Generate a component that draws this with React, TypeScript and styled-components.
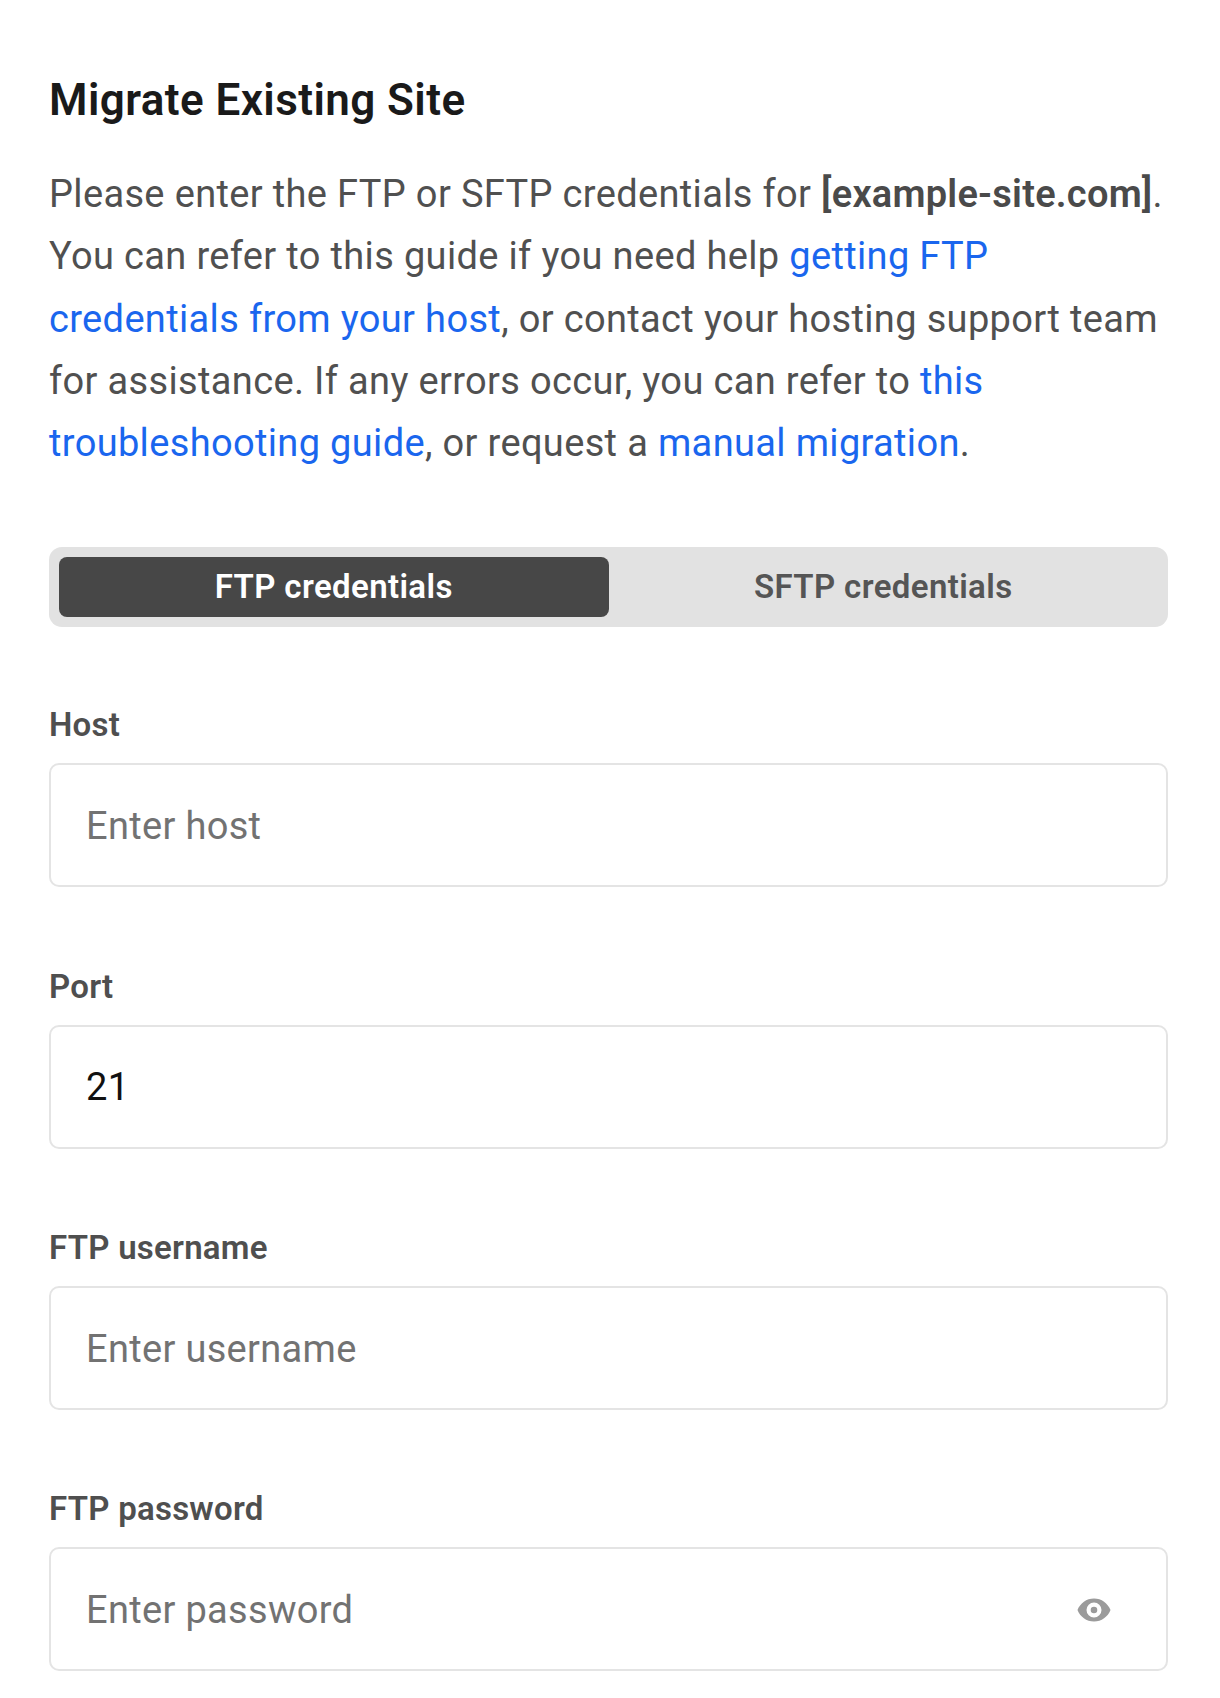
import React, { useState } from 'react';
import styled, { createGlobalStyle } from 'styled-components';

const GlobalStyle = createGlobalStyle`
  html, body {
    margin: 0;
    padding: 0;
    background: #fff;
  }
  body {
    font-family: Roboto, "Liberation Sans", sans-serif;
    -webkit-font-smoothing: antialiased;
  }
`;

const Page = styled.div`
  height: 1698px;
  overflow: hidden;
  box-sizing: border-box;
  padding: 70px 52px 0 49px;
`;

const Title = styled.h1`
  margin: 0;
  font-size: 44px;
  line-height: 60px;
  font-weight: 600;
  letter-spacing: 0.42px;
  color: #1a1a1a;
`;

const Intro = styled.p`
  margin: 33px 0 0;
  font-size: 38px;
  line-height: 62.3px;
  font-weight: 400;
  letter-spacing: 0.345px;
  color: #505050;

  b {
    font-weight: 600;
    letter-spacing: 0.23px;
    color: #4a4a4a;
  }
`;

const Link = styled.a`
  color: #1a66ee;
  text-decoration: none;
`;

const Tabs = styled.div`
  display: grid;
  grid-template-columns: 1fr 1fr;
  margin-top: 73px;
  height: 80px;
  padding: 10px;
  box-sizing: border-box;
  background: #e2e2e2;
  border-radius: 13px;
`;

const Tab = styled.button<{ $active?: boolean }>`
  border: 0;
  padding: 0 0 2px;
  border-radius: 8px;
  font-family: inherit;
  font-size: 33px;
  font-weight: 600;
  letter-spacing: 0.38px;
  background: ${(p) => (p.$active ? '#474747' : 'transparent')};
  color: ${(p) => (p.$active ? '#fff' : '#555')};
`;

const Form = styled.div`
  display: grid;
  gap: 79.3px;
  margin-top: 78px;
`;

const Field = styled.div`
  display: block;
`;

const Label = styled.label`
  display: block;
  font-size: 33px;
  line-height: 40px;
  font-weight: 600;
  letter-spacing: 0.25px;
  color: #4f4f4f;
  margin-bottom: 18px;
`;

const InputWrap = styled.div`
  display: flex;
  align-items: center;
  height: 124px;
  box-sizing: border-box;
  padding: 1px 54px 0 35px;
  border: 2px solid #e4e4e4;
  border-radius: 10px;
`;

const Input = styled.input`
  flex: 1;
  min-width: 0;
  border: 0;
  outline: 0;
  padding: 0;
  background: transparent;
  font-family: inherit;
  font-size: 38px;
  letter-spacing: 0.32px;
  color: #111;

  &::placeholder {
    color: #727272;
    opacity: 1;
  }
`;

const EyeButton = styled.button`
  display: flex;
  border: 0;
  padding: 0;
  background: none;
`;

function Eye() {
  return (
    <svg width="36" height="36" viewBox="0 0 24 24" fill="#9b9b9b">
      <path
        fillRule="evenodd"
        d="M12 4.3C7 4.3 2.73 7.5 1 12c1.73 4.5 6 7.7 11 7.7s9.27-3.2 11-7.7c-1.73-4.5-6-7.7-11-7.7zM12 17a5 5 0 1 1 0-10 5 5 0 1 1 0 10zM12 14.2a2.2 2.2 0 1 0 0-4.4 2.2 2.2 0 1 0 0 4.4z"
      />
    </svg>
  );
}

export default function App() {
  const [tab, setTab] = useState('ftp');
  const [port, setPort] = useState('21');

  return (
    <Page>
      <GlobalStyle />
      <Title>Migrate Existing Site</Title>
      <Intro>
        Please enter the FTP or SFTP credentials for <b>[example-site.com]</b>.
        You can refer to this guide if you need help <Link href="#">getting FTP credentials from your host</Link>, or
        contact your hosting support team for assistance. If any errors occur, you can refer to{' '}
        <Link href="#">this troubleshooting guide</Link>, or request a <Link href="#">manual migration</Link>.
      </Intro>

      <Tabs>
        <Tab $active={tab === 'ftp'} onClick={() => setTab('ftp')}>FTP credentials</Tab>
        <Tab $active={tab === 'sftp'} onClick={() => setTab('sftp')}>SFTP credentials</Tab>
      </Tabs>

      <Form>
        <Field>
          <Label>Host</Label>
          <InputWrap>
            <Input placeholder="Enter host" />
          </InputWrap>
        </Field>
        <Field>
          <Label>Port</Label>
          <InputWrap>
            <Input value={port} onChange={(e) => setPort(e.target.value)} />
          </InputWrap>
        </Field>
        <Field>
          <Label>FTP username</Label>
          <InputWrap>
            <Input placeholder="Enter username" />
          </InputWrap>
        </Field>
        <Field>
          <Label>FTP password</Label>
          <InputWrap>
            <Input type="password" placeholder="Enter password" />
            <EyeButton><Eye /></EyeButton>
          </InputWrap>
        </Field>
      </Form>
    </Page>
  );
}
